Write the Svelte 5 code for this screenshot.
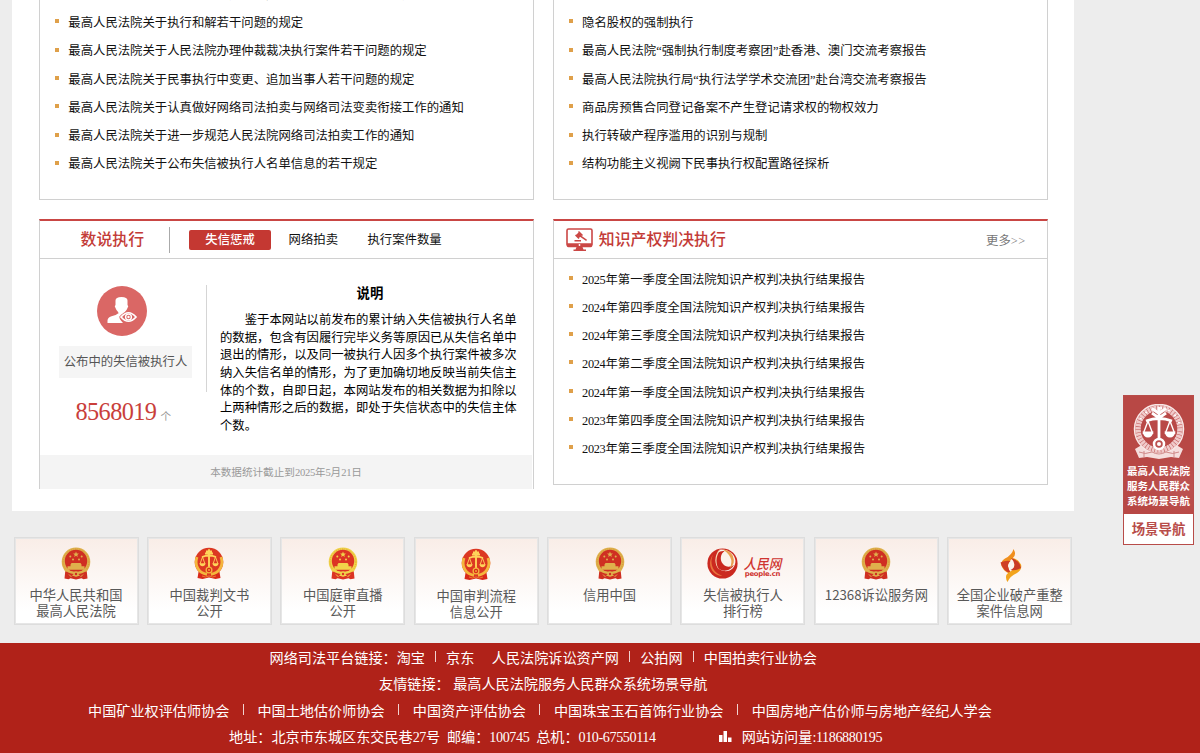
<script>
  const rules = [
    '最高人民法院关于人民法院确定财产处置参考价若干问题的规定',
    '最高人民法院关于执行和解若干问题的规定',
    '最高人民法院关于人民法院办理仲裁裁决执行案件若干问题的规定',
    '最高人民法院关于民事执行中变更、追加当事人若干问题的规定',
    '最高人民法院关于认真做好网络司法拍卖与网络司法变卖衔接工作的通知',
    '最高人民法院关于进一步规范人民法院网络司法拍卖工作的通知',
    '最高人民法院关于公布失信被执行人名单信息的若干规定'
  ];
  const research = [
    '最高人民法院执行局赴澳大利亚、新西兰考察报告',
    '隐名股权的强制执行',
    '最高人民法院“强制执行制度考察团”赴香港、澳门交流考察报告',
    '最高人民法院执行局“执行法学学术交流团”赴台湾交流考察报告',
    '商品房预售合同登记备案不产生登记请求权的物权效力',
    '执行转破产程序滥用的识别与规制',
    '结构功能主义视阙下民事执行权配置路径探析'
  ];
  const reports = [
    ['2025', '一'], ['2024', '四'], ['2024', '三'], ['2024', '二'],
    ['2024', '一'], ['2023', '四'], ['2023', '三']
  ];
  const note = [
    '的数据，包含有因履行完毕义务等原因已从失信名单中',
    '退出的情形，以及同一被执行人因多个执行案件被多次',
    '纳入失信名单的情形，为了更加确切地反映当前失信主',
    '体的个数，自即日起，本网站发布的相关数据为扣除以',
    '上两种情形之后的数据，即处于失信状态中的失信主体',
    '个数。'
  ];
  const cards = [
    { icon: 'state', lines: ['中华人民共和国', '最高人民法院'] },
    { icon: 'court', lines: ['中国裁判文书', '公开'] },
    { icon: 'bright', lines: ['中国庭审直播', '公开'] },
    { icon: 'court', lines: ['中国审判流程', '信息公开'], low: true },
    { icon: 'state', lines: ['信用中国'] },
    { icon: 'people', lines: ['失信被执行人', '排行榜'] },
    { icon: 'state', lines: ['12368诉讼服务网'] },
    { icon: 'flame', lines: ['全国企业破产重整', '案件信息网'] }
  ];
  const leaves = [-150, -128, -106, -84, -62, -40, -18];
</script>

{#snippet stateEmblem(gold, red)}
  <svg class="emblem" viewBox="0 0 30 33">
    <path d="M4.500 22h21l1 9.500-4 .8-2-1-5.500 1.200-5.500-1.200-2 1-4-.8z" fill={red} />
    <circle cx="15" cy="14.800" r="14.300" fill={gold} />
    <circle cx="15" cy="14.800" r="12.900" fill="none" stroke="#c98a28" stroke-width=".5" stroke-dasharray="1.200 1" />
    <circle cx="15" cy="14" r="11.200" fill={red} />
    <path d="M15 4.500l.8 2 2.100.1-1.600 1.300.5 2.100-1.800-1.200-1.800 1.200.5-2.100-1.600-1.300 2.100-.1z" fill={gold} />
    <g fill={gold}><circle cx="9.300" cy="9.500" r="1" /><circle cx="20.700" cy="9.500" r="1" /><circle cx="12" cy="12.400" r="1" /><circle cx="18" cy="12.400" r="1" /></g>
    <path d="M10.500 16h9l1 1.600v1.600h3v3.600H6.500v-3.600h3v-1.600z" fill={gold} />
    <path d="M5 24.500q10 5 20 0v2.500q-4 2-6 2l-1-1.500h-6L11 29q-2 0-6-2z" fill={red} />
    <path d="M4 22.500q11 7 22 0" fill="none" stroke={gold} stroke-width="1.800" />
    <circle cx="15" cy="27" r="2.700" fill={gold} />
    <circle cx="15" cy="27" r="1.200" fill={red} />
    <path d="M8 27.500l2.500 2.500M22 27.500l-2.500 2.500" fill="none" stroke={gold} stroke-width="1" />
  </svg>
{/snippet}

{#snippet courtEmblem()}
  <svg class="emblem" viewBox="0 0 30 33">
    <path d="M4.500 25h21l1 6-5 1-6.500-1.600L8.500 32l-5-1z" fill="#d9291a" />
    <circle cx="15" cy="15" r="14.300" fill="#dc3822" />
    <path d="M3 10C0 19 5 26 13 27.300M27 10C30 19 25 26 17 27.300" fill="none" stroke="#f4b63d" stroke-width="2.800" />
    <path d="M15 2.300v18M11 6.500h8M12 4.500l6 0M8 10q7-3 14 0" stroke="#ffd35a" stroke-width="1.900" fill="none" />
    <path d="M8.500 10L6 17h5zM21.500 10L19 17h5z" fill="none" stroke="#ffd35a" stroke-width=".9" />
    <path d="M5.500 16.500h6q-.5 2.800-3 2.800t-3-2.800zM18.500 16.500h6q-.5 2.800-3 2.800t-3-2.800z" fill="#ffd35a" />
    <circle cx="15" cy="23" r="3.500" fill="#f4b63d" /><circle cx="15" cy="23" r="2.200" fill="#d9291a" />
    <circle cx="15" cy="23" r=".9" fill="#f4b63d" />
    <path d="M8 29q3.500 2 7 0 3.500 2 7 0" fill="none" stroke="#f4b63d" stroke-width=".6" />
  </svg>
{/snippet}

{#snippet plainList(items)}
  <ul>
    {#each items as item}
      <li><i></i><span>{item}</span></li>
    {/each}
  </ul>
{/snippet}

<div class="page">
  <main>
    <div class="row first">
      <section class="panel">{@render plainList(rules)}</section>
      <section class="panel">{@render plainList(research)}</section>
    </div>
    <div class="row second">
      <section class="panel titled stats">
        <header>
          <h2>数说执行</h2>
          <b class="bar"></b>
          <nav><a class="on">失信惩戒</a><a>网络拍卖</a><a>执行案件数量</a></nav>
        </header>
        <div class="body">
          <div class="figure">
            <svg class="person" viewBox="0 0 50 50">
              <circle cx="25" cy="25" r="25" fill="#da6765" />
              <path d="M18.500 14.500q0-3.500 6-3.500t6 3.500v4.500q1.500 1 0 3-1 2.800-2.800 4.300v3h-6.400v-3q-1.800-1.500-2.800-4.300-1.500-2 0-3z" fill="#fff" />
              <path d="M10.500 37v-2.500q0-3 4-4.300 5-1.200 6.500-2.700 3 1.800 6.500 0l-5 5q2 3 3.500 4.500z" fill="#fff" />
              <path d="M22 31q9.500-11.500 19 0-9.500 11.500-19 0z" fill="#da6765" />
              <path d="M24 31q7.500-8.500 15 0-7.500 8.500-15 0z" fill="none" stroke="#fff" stroke-width="1.700" />
              <circle cx="31.500" cy="31" r="2.900" fill="none" stroke="#fff" stroke-width="1.400" />
              <circle cx="31.500" cy="31" r="1.200" fill="#fff" />
            </svg>
            <div class="label">公布中的失信被执行人</div>
            <div class="count"><strong>8568019</strong><small>个</small></div>
          </div>
          <b class="split"></b>
          <div class="note">
            <h3>说明</h3>
            <p class="lead">鉴于本网站以前发布的累计纳入失信被执行人名单</p>
            {#each note as line}<p>{line}</p>{/each}
          </div>
        </div>
        <div class="asof">本数据统计截止到<span class="num">2025</span>年<span class="num">5</span>月<span class="num">21</span>日</div>
      </section>
      <section class="panel titled">
        <header class="ip">
          <svg viewBox="0 0 27 23">
            <rect x="1" y="1" width="25" height="17" rx="1.500" fill="#fff" stroke="#cb4745" stroke-width="1.600" />
            <path d="M1 15.300h25V18q0 1.200-1.500 1.200h-22Q1 19.200 1 18z" fill="#cb4745" />
            <path d="M10.500 19h6l1 2.500H20V23H7.500v-1.500h2z" fill="#cb4745" />
            <circle cx="13.500" cy="17" r=".9" fill="#fff" />
            <path d="M13 3l4 4-1 1-4-4zM10 6.500l3.500 3.500-1 1L9 7.500zM12.500 4.500l3 3-2.500 2.500-3-3zM15 7.500l6 4.300-.8 1.200-6.200-4.300zM8.500 12h6.500v1.500H8.500z" fill="#cb4745" />
          </svg>
          <h2>知识产权判决执行</h2>
          <a class="more">更多<span>&gt;&gt;</span></a>
        </header>
        <ul>
          {#each reports as [year, quarter]}
            <li><i></i><span><span class="num">{year}</span>年第{quarter}季度全国法院知识产权判决执行结果报告</span></li>
          {/each}
        </ul>
      </section>
    </div>
  </main>

  <div class="cards">
    {#each cards as card}
      <a class="card" class:low={card.low}>
        <div class="mark">
          {#if card.icon === 'state'}
            {@render stateEmblem('#dfb04c', '#cf2f22')}
          {:else if card.icon === 'bright'}
            {@render stateEmblem('#f1d34a', '#dc3424')}
          {:else if card.icon === 'court'}
            {@render courtEmblem()}
          {:else if card.icon === 'people'}
            <div class="people">
              <svg viewBox="0 0 30 30">
                <circle cx="15" cy="15" r="14.600" fill="#cb2920" />
                <path d="M6 6C2 14 5 24 15 27 5 27-1 16 6 6z" fill="#e8743c" />
                <path d="M13 1.500C7 8 7 17 13 21c7 4 15-1 14.500-9C26.500 5 20 1 13 1.500z" fill="#fbf1ea" />
                <path d="M10 5C6.500 12 8 19 14 21.500c5 1.500 10-1 12-5-4 2.500-8 2-10.500-1C12 12 13 5.500 17 3q-4-.5-7 2z" fill="#c9271f" />
                <path d="M15 1.500q7 .5 10 6 3 8-3 12 3-6 .5-10.500-2.500-5-7.500-7.500z" fill="#e9a04f" />
                <path d="M12 1.500C7 7 6.500 17 12.500 21.500 8 17 8 8 13 1.500z" fill="#f8d9b5" />
              </svg>
              <div class="brand"><em>人民网</em><b>people.cn</b></div>
            </div>
          {:else}
            <svg class="flame" viewBox="0 0 22 33">
              <path d="M13.500 0q3.500 6-1 9.500-4 3-4.500 7.500.5 5 4 8-7-1-10-7-2.500-5 3-8.500 7-3.500 8.500-9.500z" fill="#f08f1e" />
              <path d="M.5 13.500q5-2.500 10-1.500-3 2.500-2.500 5.500.5 4 4 7.500Q2.500 22 .5 13.500z" fill="#cf3f25" />
              <path d="M7.500 33q-3.500-6 1-9.500 5-2 6-6.500.5-5-3-8.500 7 1.500 9.500 7 1.500 5-4 8.500-7 3-9.500 9z" fill="#f2a41d" />
              <path d="M21 19q-5 3-10.500 2 4-2 4-5.500Q14 12 11 9q8.500 2 10 10z" fill="#c93a26" />
              <circle cx="11.300" cy="16.500" r="2.700" fill="#fbf3ee" />
            </svg>
          {/if}
        </div>
        <div class="caption">{#each card.lines as line, n}{#if n}<br />{/if}{line}{/each}</div>
      </a>
    {/each}
  </div>

  <footer>
    <div class="line one">
      <span>网络司法平台链接：</span><span>淘宝</span><i></i><span>京东</span><span class="wide">人民法院诉讼资产网</span><i></i><span>公拍网</span><i></i><span>中国拍卖行业协会</span>
    </div>
    <div class="line two"><span>友情链接：</span><span>最高人民法院服务人民群众系统场景导航</span></div>
    <div class="line three">
      <span>中国矿业权评估师协会</span><i></i><span>中国土地估价师协会</span><i></i><span>中国资产评估协会</span><i></i><span>中国珠宝玉石首饰行业协会</span><i></i><span>中国房地产估价师与房地产经纪人学会</span>
    </div>
    <div class="line four">
      <span>地址：北京市东城区东交民巷<span class="num">27</span>号</span><span>邮编：<span class="num">100745</span></span><span>总机：<span class="num">010-67550114</span></span>
      <svg viewBox="0 0 13 11"><path d="M0 4h3.500v7H0zM4.500 0H8v11H4.500zM9 6.500h3.500V11H9z" fill="#fff" /></svg>
      <span>网站访问量<span class="num">:1186880195</span></span>
    </div>
  </footer>

  <aside>
    <div class="top">
      <svg viewBox="0 0 54 58">
        <path d="M8 42l38 0 5 3-4 9-8-1-12 2-12-2-8 1-4-9z" fill="#f5dedd" />
        <circle cx="27" cy="25" r="24.500" fill="#bd5150" stroke="#f9e8e7" stroke-width="1.500" />
        <circle cx="27" cy="25" r="21" fill="none" stroke="#f0caca" stroke-width="5.500" stroke-dasharray="2.600 .5" />
        <circle cx="27" cy="25" r="18" fill="#b94947" />
        {#each leaves as angle}
          <circle cx="48" cy="25" r="1" fill="#fff" transform="rotate({angle} 27 25)" />
        {/each}
        <path d="M27 3v32M20 9l7 5 7-5M20 4.500l7 5 7-5M14 17q13-5 26 0" fill="none" stroke="#fff" stroke-width="2.800" />
        <path d="M16 17l-4.500 12h9zM38 17l-4.500 12h9z" fill="none" stroke="#fff" stroke-width="1.400" />
        <path d="M10.500 27.500h11q-1 6-5.500 6t-5.500-6zM32.500 27.500h11q-1 6-5.500 6t-5.500-6z" fill="#fff" />
        <circle cx="27" cy="40" r="5" fill="#bd5150" stroke="#fff" stroke-width="2.500" />
        <circle cx="27" cy="40" r="2" fill="#fff" />
        <path d="M7 48q6 3 13 0 7 4 14 0 7 3 13 0M12 47v6M42 47v6" fill="none" stroke="#d08a89" stroke-width="1" />
      </svg>
      <span>最高人民法院</span><span>服务人民群众</span><span>系统场景导航</span>
    </div>
    <div class="go">场景导航</div>
  </aside>
</div>

<style>
  :global(body) { margin: 0; background: #ededed; }
  .page { position: relative; width: 1200px; height: 753px; overflow: hidden; background: #ededed; font-family: "Liberation Serif", "Noto Sans CJK SC", serif; font-size: 12.370px; color: #111; }
  h2, h3, p, ul { margin: 0; padding: 0; }
  ul { list-style: none; }
  svg { display: block; flex: none; }
  .num { letter-spacing: -.026em; }
  main { box-sizing: border-box; width: 1062px; height: 511px; margin-left: 12px; padding: 0 26.500px 0 27px; background: #fff; overflow: hidden; }
  .row { display: flex; gap: 19px; }
  .first { margin-top: -22px; }
  .second { margin-top: 19px; }
  .panel { box-sizing: border-box; width: 495px; height: 222px; border: 1px solid #d0d0d0; background: #fff; }
  .first ul { padding-top: .600px; }
  .titled { height: 265.500px; border-top: 2px solid #c94644; }
  li { display: flex; align-items: center; height: 28.280px; padding-left: 15px; white-space: nowrap; }
  li i { width: 4px; height: 4px; margin: 0 9.300px 1px 0; background: #dfa04a; }
  .second li i { margin-bottom: 2px; }
  .titled header { box-sizing: border-box; display: flex; align-items: center; height: 38px; border-bottom: 1px solid #d0d0d0; }
  .titled ul { padding-top: 5.500px; }
  h2 { padding-top: 1px; font-size: 15.900px; font-weight: 500; color: #c33b37; line-height: 36px; white-space: nowrap; }
  .stats { height: 270px; border-bottom: 0; }
  .stats h2 { margin-left: 40.500px; }
  .bar { width: 1px; height: 26px; margin: 0 19px 0 25px; background: #aaa; }
  nav { display: flex; line-height: 20px; white-space: nowrap; }
  nav a { margin-right: 29.500px; }
  nav .on { width: 82px; margin-right: 17.500px; border-radius: 2px; background: #c43832; color: #fff; text-align: center; font-weight: 500; }
  .body { display: flex; height: 195.500px; }
  .figure { display: flex; flex-direction: column; align-items: center; width: 133px; padding: 26.500px 14px 0 19px; }
  .person { width: 50px; height: 50px; margin-right: 7px; }
  .label { width: 133px; height: 32px; margin-top: 10.500px; background: #f5f5f5; color: #555; line-height: 33px; text-align: center; white-space: nowrap; }
  .count { display: flex; align-items: baseline; gap: 4px; margin: 18px 4.500px 0 0; line-height: 32px; color: #999; }
  .count strong { font-size: 24.300px; font-weight: 400; letter-spacing: -.024em; color: #c93f3b; }
  .count small { font-size: 10.600px; }
  .split { width: 1px; height: 107px; margin-top: 26px; background: #d5d5d5; }
  .note { width: 300px; padding: 25.500px 0 0 13px; line-height: 17.680px; color: #000; white-space: nowrap; }
  .note h3 { margin-bottom: 9.500px; font-size: 13.400px; line-height: 18px; text-align: center; font-weight: 700; }
  .note .lead { padding-left: 24.740px; }
  .asof { width: 492px; height: 34px; background: #f4f4f4; color: #999; font-size: 10.600px; line-height: 36px; text-align: center; }
  .ip svg { width: 27px; height: 23px; margin: 0 6px 0 12px; }
  .more { margin-left: auto; padding-right: 21px; color: #777; }
  .more span { letter-spacing: .030em; }
  .cards { display: flex; gap: 8.400px; padding: 25.500px 0 0 13.500px; height: 106px; font-family: "Noto Sans CJK SC", sans-serif; }
  .card { box-sizing: border-box; display: flex; flex-direction: column; align-items: center; width: 125px; height: 88.500px; padding-top: 9px; border: 1px solid #ddd; outline: 1px solid #e6e6e6; outline-offset: -2px; background: linear-gradient(#f9ede7, #fff 85%); color: #585858; font-size: 13.270px; line-height: 16px; text-align: center; white-space: nowrap; }
  .card.low { padding-top: 10px; }
  .mark { height: 40px; }
  .emblem { width: 30px; height: 33px; }
  .flame { width: 22px; height: 33px; margin-top: 2px; margin-left: 2px; }
  .people { display: flex; gap: 6px; margin-left: 2px; }
  .people svg { width: 31px; height: 31px; margin-top: 1px; }
  .brand { display: flex; flex-direction: column; align-items: center; padding-top: 10px; color: #cf3430; }
  .brand em { font-size: 12.600px; line-height: 12px; font-weight: 500; transform: scaleY(1.100); }
  .brand b { font: 700 6.900px/11px "DejaVu Sans", sans-serif; letter-spacing: -.300px; }
  footer { height: 110.500px; padding-top: 1.300px; box-sizing: border-box; background: #b02219; color: #fff; font-size: 14.130px; }
  .line { display: flex; align-items: center; height: 26.400px; white-space: nowrap; }
  .line > i { width: 1px; height: 11px; background: #f1d2d0; }
  .one { padding-left: 269.500px; }
  .one > i { margin: 0 10.100px; }
  .one .wide { margin-left: 17.500px; }
  .two { gap: 3.500px; padding-left: 379px; }
  .three { padding-left: 88px; }
  .three > i { margin: 0 13.600px; }
  .four { padding-left: 229px; gap: 6.800px; }
  .four .num { letter-spacing: -.028em; }
  .four svg { width: 13px; height: 11px; margin: 0 2.500px 0 57px; }
  aside { position: absolute; left: 1123px; top: 395px; box-sizing: border-box; width: 71px; height: 150px; border: 1px solid #b84c49; background: #fff; font-family: "Noto Sans CJK SC", sans-serif; font-weight: 700; text-align: center; }
  .top { display: flex; flex-direction: column; align-items: center; height: 118px; background: radial-gradient(circle at 80% 75%, #bd5553 0, #b84845 35%); color: #fff; font-size: 10.500px; line-height: 15px; white-space: nowrap; }
  .top svg { width: 54px; height: 58px; margin: 7.500px 0 1px; }
  .go { font-size: 13.400px; line-height: 29px; color: #b84c49; }
</style>
